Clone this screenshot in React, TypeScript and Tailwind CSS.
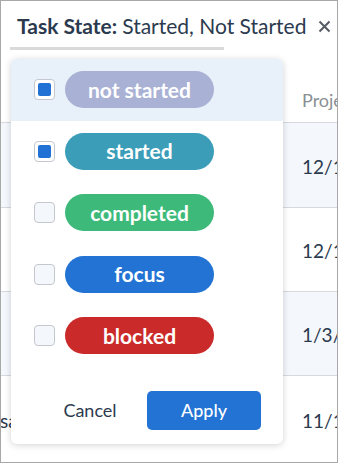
import React from "react";

const items = [
  { label: "not started", color: "bg-[#a9b1d4]", checked: true, active: true },
  { label: "started", color: "bg-[#3b9db8]", checked: true, active: false },
  { label: "completed", color: "bg-[#3dba7a]", checked: false, active: false },
  { label: "focus", color: "bg-[#2273d4]", checked: false, active: false },
  { label: "blocked", color: "bg-[#cb2a2a]", checked: false, active: false },
];

export default function App() {
  return (
    <div
      className="relative w-[339px] h-[464px] bg-white overflow-hidden"
      style={{ fontFamily: "Lato, 'Noto Sans', sans-serif" }}
    >
      <div className="relative w-[338px] h-[463px] border border-[#a8a8a8] overflow-hidden flex flex-col">
        {/* header */}
        <div className="h-[58px] flex flex-col shrink-0">
          <div className="flex items-center pt-[12px] pl-[16px] text-[21px] leading-[26px] text-[#2b3a4e] whitespace-nowrap">
            <span className="font-bold">Task State:</span>
            <span className="ml-[5px]">Started, Not Started</span>
            <svg className="ml-[12px] shrink-0" width="13" height="13" viewBox="0 0 13 13">
              <path d="M1.5 1.5 L11.5 11.5 M11.5 1.5 L1.5 11.5" stroke="#555b63" strokeWidth="2" />
            </svg>
          </div>
          <div className="ml-[9px] mt-[8px] w-[214px] h-[3px] bg-[#dadada]" />
        </div>
        {/* table */}
        <div className="flex flex-col text-[19px] text-[#2b3a4e]">
          <div className="h-[64px] flex items-end pb-[8px] border-b border-[#d6d9dd] bg-white">
            <span className="ml-[301px] text-[#8a8f95] text-[18px] whitespace-nowrap">Proje</span>
          </div>
          <div className="h-[85px] flex items-center pt-[4px] border-b border-[#d6d9dd] bg-[#f4f7fb]">
            <span className="ml-[301px] whitespace-nowrap">12/1</span>
          </div>
          <div className="h-[84px] flex items-center pt-[4px] border-b border-[#d6d9dd] bg-white">
            <span className="ml-[301px] whitespace-nowrap">12/1</span>
          </div>
          <div className="h-[84px] flex items-center pt-[4px] border-b border-[#d6d9dd] bg-[#f4f7fb]">
            <span className="ml-[301px] whitespace-nowrap">1/3/</span>
          </div>
          <div className="h-[86px] flex items-center pt-[4px] bg-white">
            <span className="ml-[-1px] w-[302px] shrink-0 whitespace-nowrap">sa</span>
            <span className="whitespace-nowrap shrink-0">11/1</span>
          </div>
        </div>
      </div>

      {/* popup */}
      <div className="absolute left-[11px] top-[59px] w-[272px] h-[385px] bg-white rounded-[6px] shadow-[0_1px_7px_rgba(0,0,0,0.18)] flex flex-col">
        {items.map((it) => (
          <div
            key={it.label}
            className={`h-[61.5px] flex items-center pl-[23px] gap-[10px] ${
              it.active ? "bg-[#e8f0fa] rounded-t-[6px]" : ""
            }`}
          >
            <div
              className={`w-[21px] h-[21px] rounded-[4px] border border-[#c4c8ce] flex items-center justify-center ${
                it.checked ? "bg-white" : "bg-[#f4f7fb]"
              }`}
            >
              {it.checked && <div className="w-[13px] h-[13px] rounded-[2px] bg-[#2271d4]" />}
            </div>
            <div
              className={`w-[149px] h-[37px] rounded-full ${it.color} flex items-center justify-center text-white font-bold text-[21px] leading-none pb-[1px]`}
            >
              {it.label}
            </div>
          </div>
        ))}
        <div className="flex mt-auto mb-[14px] px-[22px]">
          <button className="w-[114px] h-[39px] text-[18px] text-[#2b3a4e]">Cancel</button>
          <button className="w-[114px] h-[39px] rounded-[5px] bg-[#2273d4] text-white text-[18px] font-medium">
            Apply
          </button>
        </div>
      </div>
    </div>
  );
}
